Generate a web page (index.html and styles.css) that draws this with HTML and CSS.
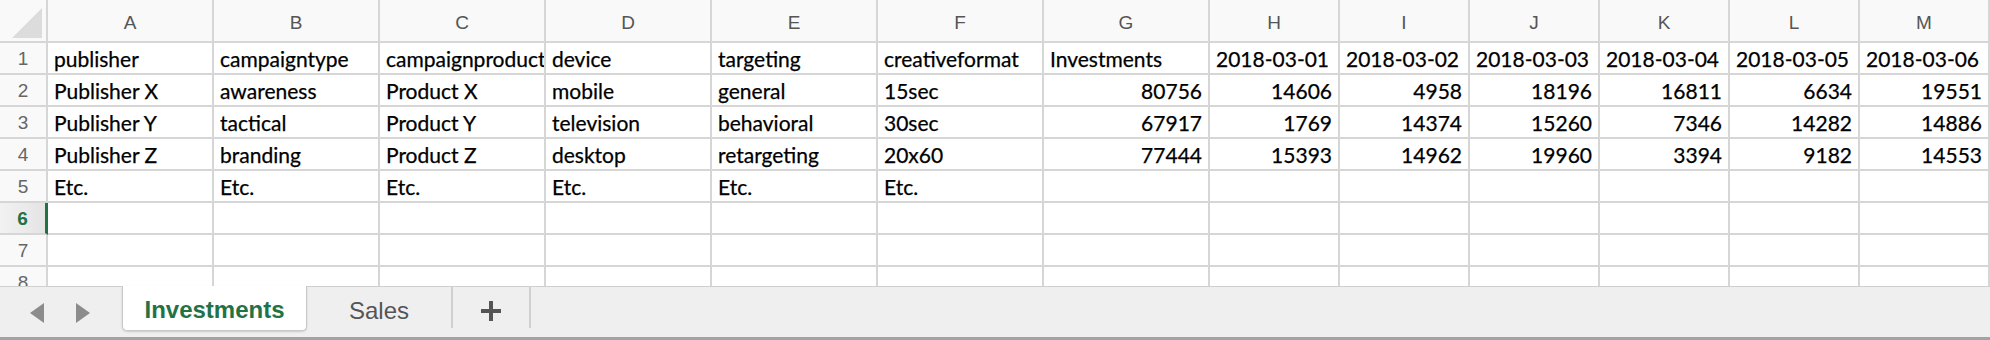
FILE: index.html
```html
<!DOCTYPE html>
<html lang="en">
<head>
    <meta charset="UTF-8">
    <title>Investments - Spreadsheet</title>
    <link rel="stylesheet" href="styles.css">
</head>
<body>
    <div class="sheet">
        <div class="grid">
            <!-- Column headers -->
            <div class="row head">
                <div class="corner">
                    <svg width="30" height="30" viewBox="0 0 30 30"><polygon points="30,0 30,30 0,30" fill="#dcdcdc"/></svg>
                </div>
                <div class="col">A</div>
                <div class="col">B</div>
                <div class="col">C</div>
                <div class="col">D</div>
                <div class="col">E</div>
                <div class="col">F</div>
                <div class="col">G</div>
                <div class="col">H</div>
                <div class="col">I</div>
                <div class="col">J</div>
                <div class="col">K</div>
                <div class="col">L</div>
                <div class="col">M</div>
            </div>

            <div class="row">
                <div class="num">1</div>
                <div class="cell">publisher</div>
                <div class="cell">campaigntype</div>
                <div class="cell">campaignproduct</div>
                <div class="cell">device</div>
                <div class="cell">targeting</div>
                <div class="cell">creativeformat</div>
                <div class="cell">Investments</div>
                <div class="cell">2018-03-01</div>
                <div class="cell">2018-03-02</div>
                <div class="cell">2018-03-03</div>
                <div class="cell">2018-03-04</div>
                <div class="cell">2018-03-05</div>
                <div class="cell">2018-03-06</div>
            </div>

            <div class="row">
                <div class="num">2</div>
                <div class="cell">Publisher X</div>
                <div class="cell">awareness</div>
                <div class="cell">Product X</div>
                <div class="cell">mobile</div>
                <div class="cell">general</div>
                <div class="cell">15sec</div>
                <div class="cell n">80756</div>
                <div class="cell n">14606</div>
                <div class="cell n">4958</div>
                <div class="cell n">18196</div>
                <div class="cell n">16811</div>
                <div class="cell n">6634</div>
                <div class="cell n">19551</div>
            </div>

            <div class="row">
                <div class="num">3</div>
                <div class="cell">Publisher Y</div>
                <div class="cell">tactical</div>
                <div class="cell">Product Y</div>
                <div class="cell">television</div>
                <div class="cell">behavioral</div>
                <div class="cell">30sec</div>
                <div class="cell n">67917</div>
                <div class="cell n">1769</div>
                <div class="cell n">14374</div>
                <div class="cell n">15260</div>
                <div class="cell n">7346</div>
                <div class="cell n">14282</div>
                <div class="cell n">14886</div>
            </div>

            <div class="row">
                <div class="num">4</div>
                <div class="cell">Publisher Z</div>
                <div class="cell">branding</div>
                <div class="cell">Product Z</div>
                <div class="cell">desktop</div>
                <div class="cell">retargeting</div>
                <div class="cell">20x60</div>
                <div class="cell n">77444</div>
                <div class="cell n">15393</div>
                <div class="cell n">14962</div>
                <div class="cell n">19960</div>
                <div class="cell n">3394</div>
                <div class="cell n">9182</div>
                <div class="cell n">14553</div>
            </div>

            <div class="row">
                <div class="num">5</div>
                <div class="cell">Etc.</div>
                <div class="cell">Etc.</div>
                <div class="cell">Etc.</div>
                <div class="cell">Etc.</div>
                <div class="cell">Etc.</div>
                <div class="cell">Etc.</div>
                <div class="cell"></div>
                <div class="cell"></div>
                <div class="cell"></div>
                <div class="cell"></div>
                <div class="cell"></div>
                <div class="cell"></div>
                <div class="cell"></div>
            </div>

            <!-- selected row -->
            <div class="row">
                <div class="num active">6</div>
                <div class="cell"></div>
                <div class="cell"></div>
                <div class="cell"></div>
                <div class="cell"></div>
                <div class="cell"></div>
                <div class="cell"></div>
                <div class="cell"></div>
                <div class="cell"></div>
                <div class="cell"></div>
                <div class="cell"></div>
                <div class="cell"></div>
                <div class="cell"></div>
                <div class="cell"></div>
            </div>

            <div class="row">
                <div class="num">7</div>
                <div class="cell"></div>
                <div class="cell"></div>
                <div class="cell"></div>
                <div class="cell"></div>
                <div class="cell"></div>
                <div class="cell"></div>
                <div class="cell"></div>
                <div class="cell"></div>
                <div class="cell"></div>
                <div class="cell"></div>
                <div class="cell"></div>
                <div class="cell"></div>
                <div class="cell"></div>
            </div>

            <div class="row">
                <div class="num">8</div>
                <div class="cell"></div>
                <div class="cell"></div>
                <div class="cell"></div>
                <div class="cell"></div>
                <div class="cell"></div>
                <div class="cell"></div>
                <div class="cell"></div>
                <div class="cell"></div>
                <div class="cell"></div>
                <div class="cell"></div>
                <div class="cell"></div>
                <div class="cell"></div>
                <div class="cell"></div>
            </div>
        </div>

        <!-- Sheet tabs -->
        <div class="tabbar">
            <div class="arrows">
                <svg width="14" height="20" viewBox="0 0 14 20"><polygon points="14,0 14,20 0,10" fill="#8c8c8c"/></svg>
                <svg width="14" height="20" viewBox="0 0 14 20"><polygon points="0,0 0,20 14,10" fill="#8c8c8c"/></svg>
            </div>
            <div class="tab current">Investments</div>
            <div class="tab">Sales</div>
            <div class="tab add">
                <svg width="20" height="20" viewBox="0 0 20 20"><rect x="8" y="0" width="4" height="20" fill="#555"/><rect x="0" y="8" width="20" height="4" fill="#555"/></svg>
            </div>
        </div>
    </div>
</body>
</html>
```

FILE: styles.css
```css
body {
    margin: 0;
    padding: 0;
    background-color: #fff;
    overflow: hidden;
}

.sheet {
    width: 1990px;
    height: 340px;
    display: flex;
    flex-direction: column;
}

.grid {
    height: 286px;
    overflow: hidden;
}

.row {
    display: grid;
    grid-template-columns: 48px repeat(7, 166px) repeat(6, 130px);
    height: 32px;
}

.row > div {
    box-sizing: border-box;
    border-right: 2px solid #d6d6d6;
    border-bottom: 2px solid #d6d6d6;
    white-space: nowrap;
    overflow: hidden;
}

.row.head {
    height: 43px;
}

.corner {
    background-color: #f9f9f9;
    padding: 8px 0 0 12px;
}

.corner svg {
    display: block;
}

.col {
    background-color: #f9f9f9;
    font-family: "Liberation Sans", Arial, sans-serif;
    font-size: 19px;
    color: #555;
    text-align: center;
    line-height: 45px;
}

.num {
    background-color: #f9f9f9;
    font-family: "Liberation Sans", Arial, sans-serif;
    font-size: 19px;
    color: #666;
    text-align: center;
    line-height: 32px;
}

.num.active {
    background: linear-gradient(to right, #f2f2f2, #e4e4e4);
    color: #217346;
    font-weight: bold;
    border-right: 3px solid #217346;
}

.cell {
    font-family: Lato, "Noto Sans", sans-serif;
    font-size: 21px;
    color: #000;
    -webkit-text-stroke: 0.25px #000;
    padding: 0 6px;
    line-height: 31px;
}

.cell.n {
    text-align: right;
}

.tabbar {
    flex: 1;
    display: flex;
    align-items: stretch;
    background-color: #efefef;
    border-top: 1px solid #cfcfcf;
    border-bottom: 3px solid #a3a3a3;
    font-family: "Liberation Sans", Arial, sans-serif;
    font-size: 24px;
}

.arrows {
    width: 122px;
    display: flex;
    align-items: center;
    gap: 32px;
    padding-left: 30px;
    padding-top: 2px;
    box-sizing: border-box;
}

.tab {
    display: flex;
    align-items: center;
    justify-content: center;
    width: 146px;
    color: #555;
    box-sizing: border-box;
    border-right: 2px solid #d0d0d0;
    margin-bottom: 9px;
    padding-top: 6px;
}

.tab.current {
    width: 185px;
    margin-top: -1px;
    margin-bottom: 6px;
    padding-top: 4px;
    background-color: #fff;
    color: #217346;
    font-weight: bold;
    border: 1px solid #c8c8c8;
    border-top: none;
    border-radius: 0 0 5px 5px;
    box-shadow: 0 1px 2px rgba(0, 0, 0, 0.15);
}

.tab.add {
    width: 78px;
}

.tab.add svg {
    display: block;
}
```
